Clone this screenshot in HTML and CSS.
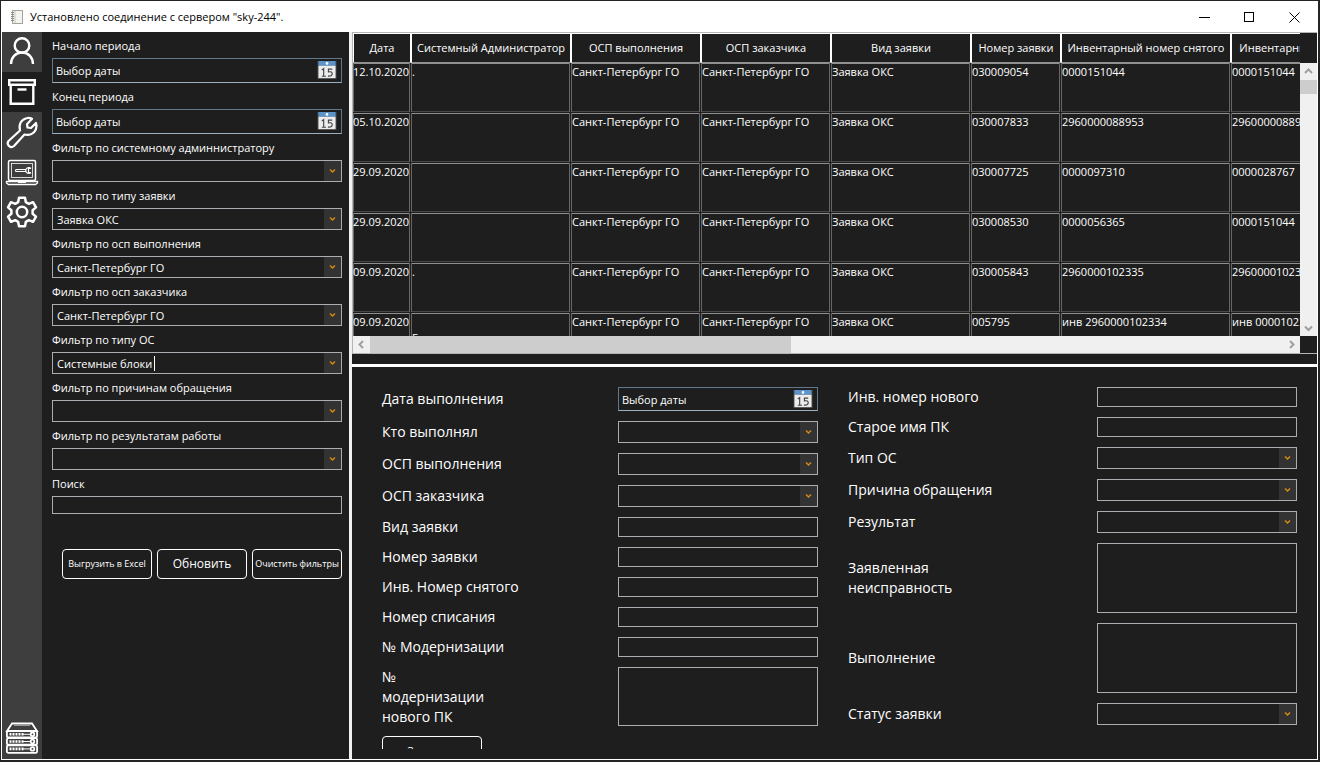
FILE: index.html
```html
<!DOCTYPE html>
<html lang="ru">
<head>
<meta charset="utf-8">
<title>Установлено соединение с сервером "sky-244".</title>
<link rel="stylesheet" href="styles.css">
</head>
<body>
<svg class="defs" aria-hidden="true">
  <symbol id="chev" viewBox="0 0 7 6"><path d="M1 1.5 3.5 4 6 1.5" fill="none" stroke="#d48a16" stroke-width="1.5"/></symbol>
  <symbol id="cal" viewBox="0 0 20 20">
    <rect x="0" y="0" width="20" height="19" fill="#4a4a4a"/>
    <rect x="1" y="0" width="18" height="5" fill="#5b93cb"/>
    <circle cx="10" cy="2.5" r="1.4" fill="#fff"/>
    <rect x="1" y="5" width="18" height="13" fill="#ececec"/>
    <path d="M4.500 9.500 6.500 8v8M4.500 16h4.500M15.500 8.500h-4v3c3-.6 4 .3 4 2s-2 3-4.500 2.200" fill="none" stroke="#444" stroke-width="1.200"/>
  </symbol>
</svg>
<div class="window">
  <header class="titlebar">
    <svg class="app-icon" viewBox="0 0 14 16"><rect x="2.500" y="1.500" width="10" height="13" fill="#f4f4ee" stroke="#a3a39b"/><path d="M5 2v12" stroke="#c9c9c0"/><path d="M1 3.500h3M1 5.500h3M1 7.500h3M1 9.500h3M1 11.500h3" stroke="#8d8d88"/></svg>
    <h1 class="title">Установлено соединение с сервером "sky-244".</h1>
    <div class="caption-buttons">
      <button class="caption-button" aria-label="Свернуть"><svg viewBox="0 0 11 11"><path d="M0 5.500h11" stroke="#000"/></svg></button>
      <button class="caption-button" aria-label="Развернуть"><svg viewBox="0 0 11 11"><rect x=".5" y=".5" width="9" height="9" fill="none" stroke="#000"/></svg></button>
      <button class="caption-button" aria-label="Закрыть"><svg viewBox="0 0 11 11"><path d="m.5.5 10 10M10.500.5l-10 10" stroke="#000"/></svg></button>
    </div>
  </header>
  <div class="body">
    <nav class="sidebar">
      <button class="nav-item" aria-label="Пользователь"><svg viewBox="0 0 40 40" fill="none" stroke="#fff" stroke-width="2.400"><circle cx="20" cy="13.500" r="7.300"/><path d="M9 32c0-6.500 4.500-11.500 11-11.500S31 25.500 31 32"/></svg></button>
      <button class="nav-item active" aria-label="Архив"><svg viewBox="0 0 40 40" fill="none" stroke="#fff" stroke-width="2.400"><path d="M7.200 8.200h25.600v4.600H7.200zM8.700 13v18.800h22.600V13" /><path d="M15.500 17.500h9"/></svg></button>
      <button class="nav-item" aria-label="Ремонт"><svg viewBox="0 0 40 40" fill="none" stroke="#fff" stroke-width="2.200" stroke-linejoin="round"><path d="M6.500 29 18 18.500c-1.500-6 1-11 6.500-12.300 2-.5 4-.2 5.500.5l-5 5.500.5 3.300 3.500.5 5-5c.8 2 .8 4-.2 6.500-1.800 4.300-6.300 6.200-11.300 5L12 34c-3.500 3-8-1.500-5.500-5z"/></svg></button>
      <button class="nav-item" aria-label="Модернизация"><svg viewBox="0 0 40 40" fill="none" stroke="#fff"><rect x="6.500" y="8.500" width="27" height="20" rx="1.500" stroke-width="1.500"/><rect x="9.500" y="11.500" width="21" height="14" stroke-width=".8"/><path d="M4.500 29.500h31v1.500l-2 1.500h-27l-2-1.500z" stroke-width="1.300"/><path d="M16 30.500h8M29 16.500a3 3 0 1 0 0 4M29 16.500h-2.500v4H29M23.500 17.500H14.500a1 1 0 0 0 0 2h9" stroke-width="1.200"/></svg></button>
      <button class="nav-item" aria-label="Настройки"><svg viewBox="0 0 40 40" fill="none" stroke="#fff" stroke-width="2.500" stroke-linejoin="round"><circle cx="20" cy="20" r="5.200"/><path d="M17 5.800h6l.8 4.300 3 1.700 4.200-1.600 3 5.200-3.400 2.800v3.600l3.400 2.800-3 5.200-4.200-1.600-3 1.700-.8 4.300h-6l-.8-4.300-3-1.700L9 29.800l-3-5.200 3.400-2.800v-3.600L6 15.400l3-5.200 4.200 1.600 3-1.700z"/></svg></button>
      <button class="nav-item server" aria-label="Сервер"><svg viewBox="0 0 40 40" fill="none" stroke="#fff"><path d="M5 12 10 4.500h20l5 7.500z" stroke-width="1.800"/><path d="M12 6.500h16" stroke="#999"/><rect x="4.900" y="12" width="30.200" height="6.500" rx="1.500" stroke-width="1.800"/><rect x="4.900" y="19.200" width="30.200" height="6.500" rx="1.500" stroke-width="1.800"/><rect x="4.900" y="26.400" width="30.200" height="7.500" rx="1.500" stroke-width="1.800"/><path d="M7.500 15.300h14M7.500 22.500h14M7.500 29.900h14" stroke-width="2.600" stroke-dasharray="2 1"/><path d="M21 15.300h7M21 22.500h7M21 29.900h7"/><g stroke-width="1.800"><circle cx="30.500" cy="15.300" r="1.800"/><circle cx="30.500" cy="22.500" r="1.800"/><circle cx="30.500" cy="29.900" r="1.800"/></g></svg></button>
    </nav>

    <form class="filters">
      <label for="f-start">Начало периода</label>
      <div class="date"><input id="f-start" type="text" value="Выбор даты"><button type="button" aria-label="Календарь"><svg><use href="#cal"/></svg></button></div>
      <label for="f-end">Конец периода</label>
      <div class="date"><input id="f-end" type="text" value="Выбор даты"><button type="button" aria-label="Календарь"><svg><use href="#cal"/></svg></button></div>
      <label for="f-admin">Фильтр по системному админнистратору</label>
      <div class="combo"><select id="f-admin"><option></option></select><svg><use href="#chev"/></svg></div>
      <label for="f-kind">Фильтр по типу заявки</label>
      <div class="combo"><select id="f-kind"><option>Заявка ОКС</option></select><svg><use href="#chev"/></svg></div>
      <label for="f-exec">Фильтр по осп выполнения</label>
      <div class="combo"><select id="f-exec"><option>Санкт-Петербург ГО</option></select><svg><use href="#chev"/></svg></div>
      <label for="f-client">Фильтр по осп заказчика</label>
      <div class="combo"><select id="f-client"><option>Санкт-Петербург ГО</option></select><svg><use href="#chev"/></svg></div>
      <label for="f-os">Фильтр по типу ОС</label>
      <div class="combo"><select id="f-os"><option>Системные блоки</option></select><span class="caret"></span><svg><use href="#chev"/></svg></div>
      <label for="f-reason">Фильтр по причинам обращения</label>
      <div class="combo"><select id="f-reason"><option></option></select><svg><use href="#chev"/></svg></div>
      <label for="f-result">Фильтр по результатам работы</label>
      <div class="combo"><select id="f-result"><option></option></select><svg><use href="#chev"/></svg></div>
      <label for="f-search">Поиск</label>
      <input class="text search" id="f-search" type="text">
      <div class="actions">
        <button type="button" class="button small">Выгрузить в Excel</button>
        <button type="button" class="button">Обновить</button>
        <button type="button" class="button small">Очистить фильтры</button>
      </div>
    </form>

    <main class="content">
      <section class="grid-pane">
        <div class="datagrid">
          <div class="viewport">
            <table>
              <colgroup><col class="c58"><col class="c160"><col class="c130"><col class="c130"><col class="c140"><col class="c90"><col class="c170"><col class="c170"></colgroup>
              <thead><tr><th>Дата</th><th>Системный Администратор</th><th>ОСП выполнения</th><th>ОСП заказчика</th><th>Вид заявки</th><th>Номер заявки</th><th>Инвентарный номер снятого</th><th>Инвентарный номер нового</th></tr></thead>
              <tbody>
                <tr><td>12.10.2020</td><td>.</td><td>Санкт-Петербург ГО</td><td>Санкт-Петербург ГО</td><td>Заявка ОКС</td><td>030009054</td><td>0000151044</td><td>0000151044</td></tr>
                <tr><td>05.10.2020</td><td></td><td>Санкт-Петербург ГО</td><td>Санкт-Петербург ГО</td><td>Заявка ОКС</td><td>030007833</td><td>2960000088953</td><td>2960000088953</td></tr>
                <tr><td>29.09.2020</td><td></td><td>Санкт-Петербург ГО</td><td>Санкт-Петербург ГО</td><td>Заявка ОКС</td><td>030007725</td><td>0000097310</td><td>0000028767</td></tr>
                <tr><td>29.09.2020</td><td></td><td>Санкт-Петербург ГО</td><td>Санкт-Петербург ГО</td><td>Заявка ОКС</td><td>030008530</td><td>0000056365</td><td>0000151044</td></tr>
                <tr><td>09.09.2020</td><td>.</td><td>Санкт-Петербург ГО</td><td>Санкт-Петербург ГО</td><td>Заявка ОКС</td><td>030005843</td><td>2960000102335</td><td>2960000102335</td></tr>
                <tr><td>09.09.2020</td><td><br>Г</td><td>Санкт-Петербург ГО</td><td>Санкт-Петербург ГО</td><td>Заявка ОКС</td><td>005795</td><td>инв 2960000102334</td><td>инв 0000102334</td></tr>
              </tbody>
            </table>
          </div>
          <div class="vscroll">
            <svg viewBox="0 0 17 17"><path d="m5 10 3.500-3.500L12 10"/></svg>
            <div class="vthumb"></div>
            <svg class="last" viewBox="0 0 17 17"><path d="m5 7.500 3.500 3.500L12 7.500"/></svg>
          </div>
          <div class="hscroll">
            <svg viewBox="0 0 17 17"><path d="M10 5 6.500 8.500 10 12"/></svg>
            <div class="hthumb"></div>
            <svg class="last" viewBox="0 0 17 17"><path d="M7 5l3.500 3.500L7 12"/></svg>
          </div>
        </div>
      </section>
      <section class="detail-pane">
        <form class="detail">
          <div class="column first">
            <div class="row"><label for="d-date">Дата выполнения</label><div class="date"><input id="d-date" type="text" value="Выбор даты"><button type="button" aria-label="Календарь"><svg><use href="#cal"/></svg></button></div></div>
            <div class="row"><label for="d-who">Кто выполнял</label><div class="combo"><select id="d-who"></select><svg><use href="#chev"/></svg></div></div>
            <div class="row"><label for="d-exec">ОСП выполнения</label><div class="combo"><select id="d-exec"></select><svg><use href="#chev"/></svg></div></div>
            <div class="row"><label for="d-client">ОСП заказчика</label><div class="combo"><select id="d-client"></select><svg><use href="#chev"/></svg></div></div>
            <div class="row"><label for="d-kind">Вид заявки</label><input class="text" id="d-kind" type="text"></div>
            <div class="row"><label for="d-num">Номер заявки</label><input class="text" id="d-num" type="text"></div>
            <div class="row"><label for="d-old">Инв. Номер снятого</label><input class="text" id="d-old" type="text"></div>
            <div class="row"><label for="d-off">Номер списания</label><input class="text" id="d-off" type="text"></div>
            <div class="row"><label for="d-mod">№ Модернизации</label><input class="text" id="d-mod" type="text"></div>
            <div class="row"><label for="d-modnew">№<br>модернизации<br>нового ПК</label><textarea class="text area short" id="d-modnew"></textarea></div>
            <button type="button" class="button save">Записать</button>
          </div>
          <div class="column second">
            <div class="row"><label for="d-new">Инв. номер нового</label><input class="text" id="d-new" type="text"></div>
            <div class="row"><label for="d-pc">Старое имя ПК</label><input class="text" id="d-pc" type="text"></div>
            <div class="row"><label for="d-os">Тип ОС</label><div class="combo"><select id="d-os"></select><svg><use href="#chev"/></svg></div></div>
            <div class="row"><label for="d-reason">Причина обращения</label><div class="combo"><select id="d-reason"></select><svg><use href="#chev"/></svg></div></div>
            <div class="row"><label for="d-result">Результат</label><div class="combo"><select id="d-result"></select><svg><use href="#chev"/></svg></div></div>
            <div class="row"><label for="d-fault">Заявленная<br>неисправность</label><textarea class="text area" id="d-fault"></textarea></div>
            <div class="row"><label for="d-done">Выполнение</label><textarea class="text area" id="d-done"></textarea></div>
            <div class="row"><label for="d-status">Статус заявки</label><div class="combo"><select id="d-status"></select><svg><use href="#chev"/></svg></div></div>
          </div>
        </form>
      </section>
    </main>
  </div>
</div>
</body>
</html>
```
FILE: styles.css
```css
* { box-sizing: border-box; }
body {
  margin: 0;
  padding: 1px 2px 2px 1px;
  height: 100vh;
  background: #242326;
  color: #fff;
  font: 11px/16px "Open Sans", "Noto Sans", sans-serif;
}
button, input, select, textarea { font: inherit; color: inherit; margin: 0; padding: 0; border: 0; background: none; border-radius: 0; }
svg { display: block; flex: none; }
.defs { display: none; }
.window { height: 100%; display: flex; flex-direction: column; border: 1px solid #fff; background: #1e1e1e; }
.titlebar { flex: 0 0 30px; display: flex; align-items: center; background: #fff; color: #000; padding-left: 8px; }
.app-icon { width: 14px; height: 16px; margin-right: 6px; }
.title { margin: 0; font: inherit; flex: 1; }
.caption-buttons { display: flex; height: 100%; }
.caption-button { width: 45px; display: grid; place-items: center; }
.caption-button svg { width: 11px; height: 11px; }
.body { flex: 1; min-height: 0; display: flex; }

.sidebar { width: 40px; background: #3e3e3e; display: flex; flex-direction: column; }
.nav-item { width: 40px; height: 40px; }
.nav-item svg { width: 40px; height: 40px; }
.nav-item.active { background: #1e1e1e; }
.nav-item.server { margin-top: auto; }

.filters { width: 307px; padding: 0 7px 0 10px; }
.filters label { display: block; height: 26px; padding: 6px 0 4px; }
.text { display: block; width: 100%; height: 20px; border: 1px solid #abadb3; }
.search { height: 18px; }
.date { position: relative; display: flex; align-items: center; height: 25px; border: 1px solid #61788a; border-bottom-color: #9db0c0; padding: 0 4px 0 3px; }
.date input { flex: 1; min-width: 0; height: 100%; }
.date svg { width: 20px; height: 19px; }
.combo { position: relative; height: 22px; border: 1px solid #abadb3; }
.combo select { appearance: none; display: block; width: 100%; height: 100%; padding: 1px 20px 0 4px; }
.combo option { background: #1e1e1e; }
.combo svg { position: absolute; top: 0; right: 0; width: 17px; height: 100%; padding: 7px 5px; background: #333; pointer-events: none; }
.caret { position: absolute; left: 101px; top: 3px; width: 1px; height: 15px; background: #fff; }
.actions { display: flex; gap: 5px; margin-top: 35px; padding-left: 10px; }
.button { flex: 1 1 0; min-width: 0; height: 30px; border: 1px solid #fff; border-radius: 4px; white-space: nowrap; font-size: 12px; }
.button.small { font-size: 9px; }

.content { flex: 1; min-width: 0; border-left: 3px solid #f0f0f0; display: grid; grid-template-rows: 335fr 392fr; }
.grid-pane { min-height: 0; min-width: 0; padding-bottom: 10px; border-bottom: 3px solid #fff; }
.datagrid { height: 100%; border: solid #b4b4b4; border-width: 1px 0 1px 1px; display: grid; grid-template: 30px minmax(0, 1fr) 17px / minmax(0, 1fr) 17px; }
.viewport { grid-area: 1 / 1 / 3 / 2; overflow: hidden; }
table { table-layout: fixed; width: 1048px; border-collapse: separate; border-spacing: 0; }
.c58 { width: 58px; }
.c90 { width: 90px; }
.c130 { width: 130px; }
.c140 { width: 140px; }
.c160 { width: 160px; }
.c170 { width: 170px; }
th { height: 30px; padding: 0; font-weight: 400; border: 1px solid #fff; border-bottom-color: #8f8f94; white-space: nowrap; }
td { height: 50px; padding: 1px 0 0 1px; vertical-align: top; white-space: nowrap; border: solid #1e1e1e; border-width: 0 1px 1px 0; box-shadow: inset 1px 0 #666, inset -1px 0 #666, inset 0 1px #909090, inset 0 -1px #484848; }
td:first-child { padding-left: 0; }
.vscroll { grid-area: 2 / 2; background: #f0f0f0; display: flex; flex-direction: column; }
.hscroll { grid-area: 3 / 1; background: #f0f0f0; display: flex; }
.vscroll svg, .hscroll svg { width: 17px; height: 17px; fill: none; stroke: #a0a0a0; stroke-width: 2; }
.vthumb { height: 14px; background: #cdcdcd; }
.hthumb { width: 44.5%; background: #cdcdcd; }
.vscroll .last { margin-top: auto; }
.hscroll .last { margin-left: auto; }

.detail-pane { min-height: 0; padding-bottom: 10px; }
.detail { height: 100%; overflow: hidden; padding: 20px 20px 0 30px; display: flex; align-items: flex-start; gap: 30px; }
.column { display: grid; gap: 10px; font-size: 14px; line-height: 20px; }
.first { flex: 436; }
.second { flex: 449; }
.row { display: flex; justify-content: space-between; align-items: center; }
.row .text, .row .combo, .row .date { flex: 0 0 200px; width: 200px; }
.row .date { height: 24px; font-size: 11px; }
.row label { margin: -1px 0; }
.row .area { height: 70px; resize: none; }
.row .short { height: 59px; }
.save { width: 100px; font-size: 11px; }
```
